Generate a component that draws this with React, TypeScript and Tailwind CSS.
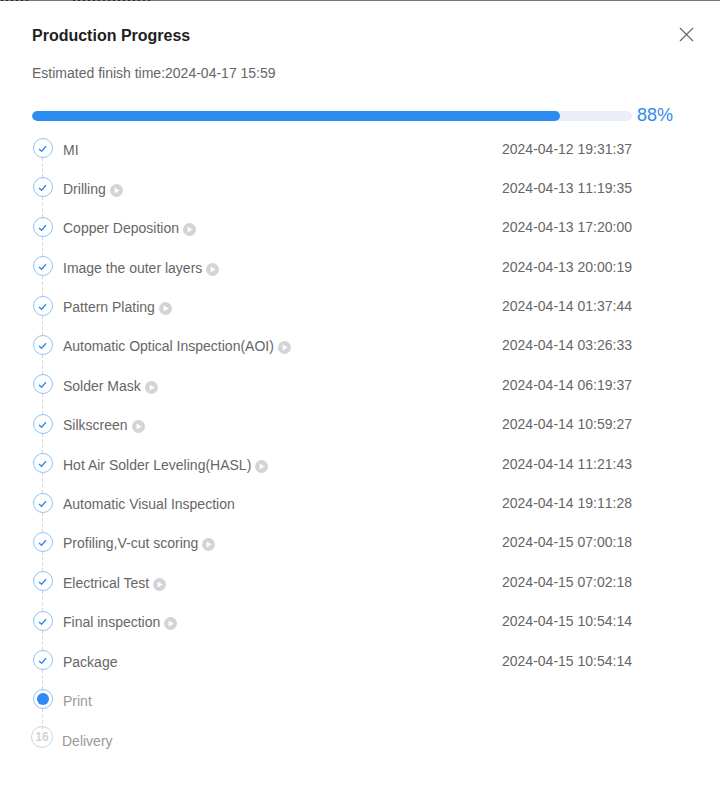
import { X } from "lucide-react";

const steps = [
  { name: "MI", time: "2024-04-12 19:31:37", play: false },
  { name: "Drilling", time: "2024-04-13 11:19:35", play: true },
  { name: "Copper Deposition", time: "2024-04-13 17:20:00", play: true },
  { name: "Image the outer layers", time: "2024-04-13 20:00:19", play: true },
  { name: "Pattern Plating", time: "2024-04-14 01:37:44", play: true },
  { name: "Automatic Optical Inspection(AOI)", time: "2024-04-14 03:26:33", play: true },
  { name: "Solder Mask", time: "2024-04-14 06:19:37", play: true },
  { name: "Silkscreen", time: "2024-04-14 10:59:27", play: true },
  { name: "Hot Air Solder Leveling(HASL)", time: "2024-04-14 11:21:43", play: true },
  { name: "Automatic Visual Inspection", time: "2024-04-14 19:11:28", play: false },
  { name: "Profiling,V-cut scoring", time: "2024-04-15 07:00:18", play: true },
  { name: "Electrical Test", time: "2024-04-15 07:02:18", play: true },
  { name: "Final inspection", time: "2024-04-15 10:54:14", play: true },
  { name: "Package", time: "2024-04-15 10:54:14", play: false },
];

function PlayIcon() {
  return (
    <svg width="13" height="13" viewBox="0 0 13 13" className="ml-[4px] mt-[2px] shrink-0">
      <circle cx="6.5" cy="6.5" r="6.5" fill="#d4d4d8" />
      <path d="M4.6 3.6 L9.6 6.5 L4.6 9.4 Z" fill="#ffffff" />
    </svg>
  );
}

function CheckCircle() {
  return (
    <div className="flex h-[20px] w-[20px] items-center justify-center rounded-full border border-[#8cc4f8] bg-white">
      <svg width="10" height="10" viewBox="0 0 10 10">
        <path d="M1 6 L3.6 8.3 L8 3.2" fill="none" stroke="#2d8cf0" strokeWidth="1.4" />
      </svg>
    </div>
  );
}

function Connector() {
  return <div className="ml-[9px] h-[19.4px] w-0 border-l border-dashed border-[#d4d4d8]" />;
}

// strip of page behind the dialog, only its last pixel row shows
function TopEdge() {
  return (
    <div className="flex h-[1px] bg-[#777777]">
      <div className="ml-[1px] w-[29px] bg-[repeating-linear-gradient(90deg,#2a2a2a_0,#2a2a2a_2px,#777777_2px,#777777_5px)]" />
      <div className="ml-[43px] w-[80px] bg-[repeating-linear-gradient(90deg,#2a2a2a_0,#2a2a2a_2px,#777777_2px,#777777_5px)]" />
    </div>
  );
}

export default function App() {
  return (
    <div className="h-[792px] w-[720px] overflow-hidden bg-white font-['Liberation_Sans',Arial,sans-serif]">
      <TopEdge />

      <div className="flex items-start justify-between pl-[32px] pr-[21px] pt-[26px]">
        <h1 className="text-[16px] font-bold leading-[18px] text-[#1f1f1f]">Production Progress</h1>
        <X size={25} strokeWidth={1.1} className="-mb-[7px] -mt-[5px] text-[#666666]" />
      </div>

      <p className="pl-[32px] pt-[20px] text-[14px] leading-[16px] text-[#666666]">
        Estimated finish time:2024-04-17 15:59
      </p>

      <div className="flex items-start pl-[32px] pt-[25px]">
        <div className="mt-[5px] h-[10px] w-[600px] overflow-hidden rounded-full bg-[#ebeef7]">
          <div className="h-full w-[88%] rounded-full bg-[#2d8cf0]" />
        </div>
        <span className="-mt-[1px] ml-[5px] text-[18px] leading-[20px] text-[#2d8cf0]">88%</span>
      </div>

      <div className="pl-[33px] pr-[88px] pt-[13px]">
        {steps.map((step) => (
          <div key={step.name} className="flex items-start">
            <div className="w-[20px] shrink-0">
              <CheckCircle />
              <Connector />
            </div>
            <div className="ml-[10px] flex h-[20px] flex-1 items-center justify-between pt-[4px] text-[14px] text-[#666666]">
              <span className="flex items-center">
                {step.name}
                {step.play && <PlayIcon />}
              </span>
              <span className="-mt-[2px] [font-kerning:none]">{step.time}</span>
            </div>
          </div>
        ))}

        <div className="flex items-start">
          <div className="w-[20px] shrink-0">
            <div className="flex h-[20px] w-[20px] items-center justify-center rounded-full border border-[#8cc4f8]">
              <div className="h-[12px] w-[12px] rounded-full bg-[#2d8cf0]" />
            </div>
            <Connector />
          </div>
          <span className="ml-[10px] pt-[4px] text-[14px] leading-[16px] text-[#999999]">Print</span>
        </div>

        <div className="-mt-[2.4px] flex items-start">
          <div className="-ml-[2px] flex h-[22px] w-[22px] items-center justify-center rounded-full border border-[#d4d4d8] text-[12px] font-bold text-[#d4d4d8]">
            16
          </div>
          <span className="ml-[9px] pt-[7px] text-[14px] leading-[16px] text-[#999999]">Delivery</span>
        </div>
      </div>
    </div>
  );
}
